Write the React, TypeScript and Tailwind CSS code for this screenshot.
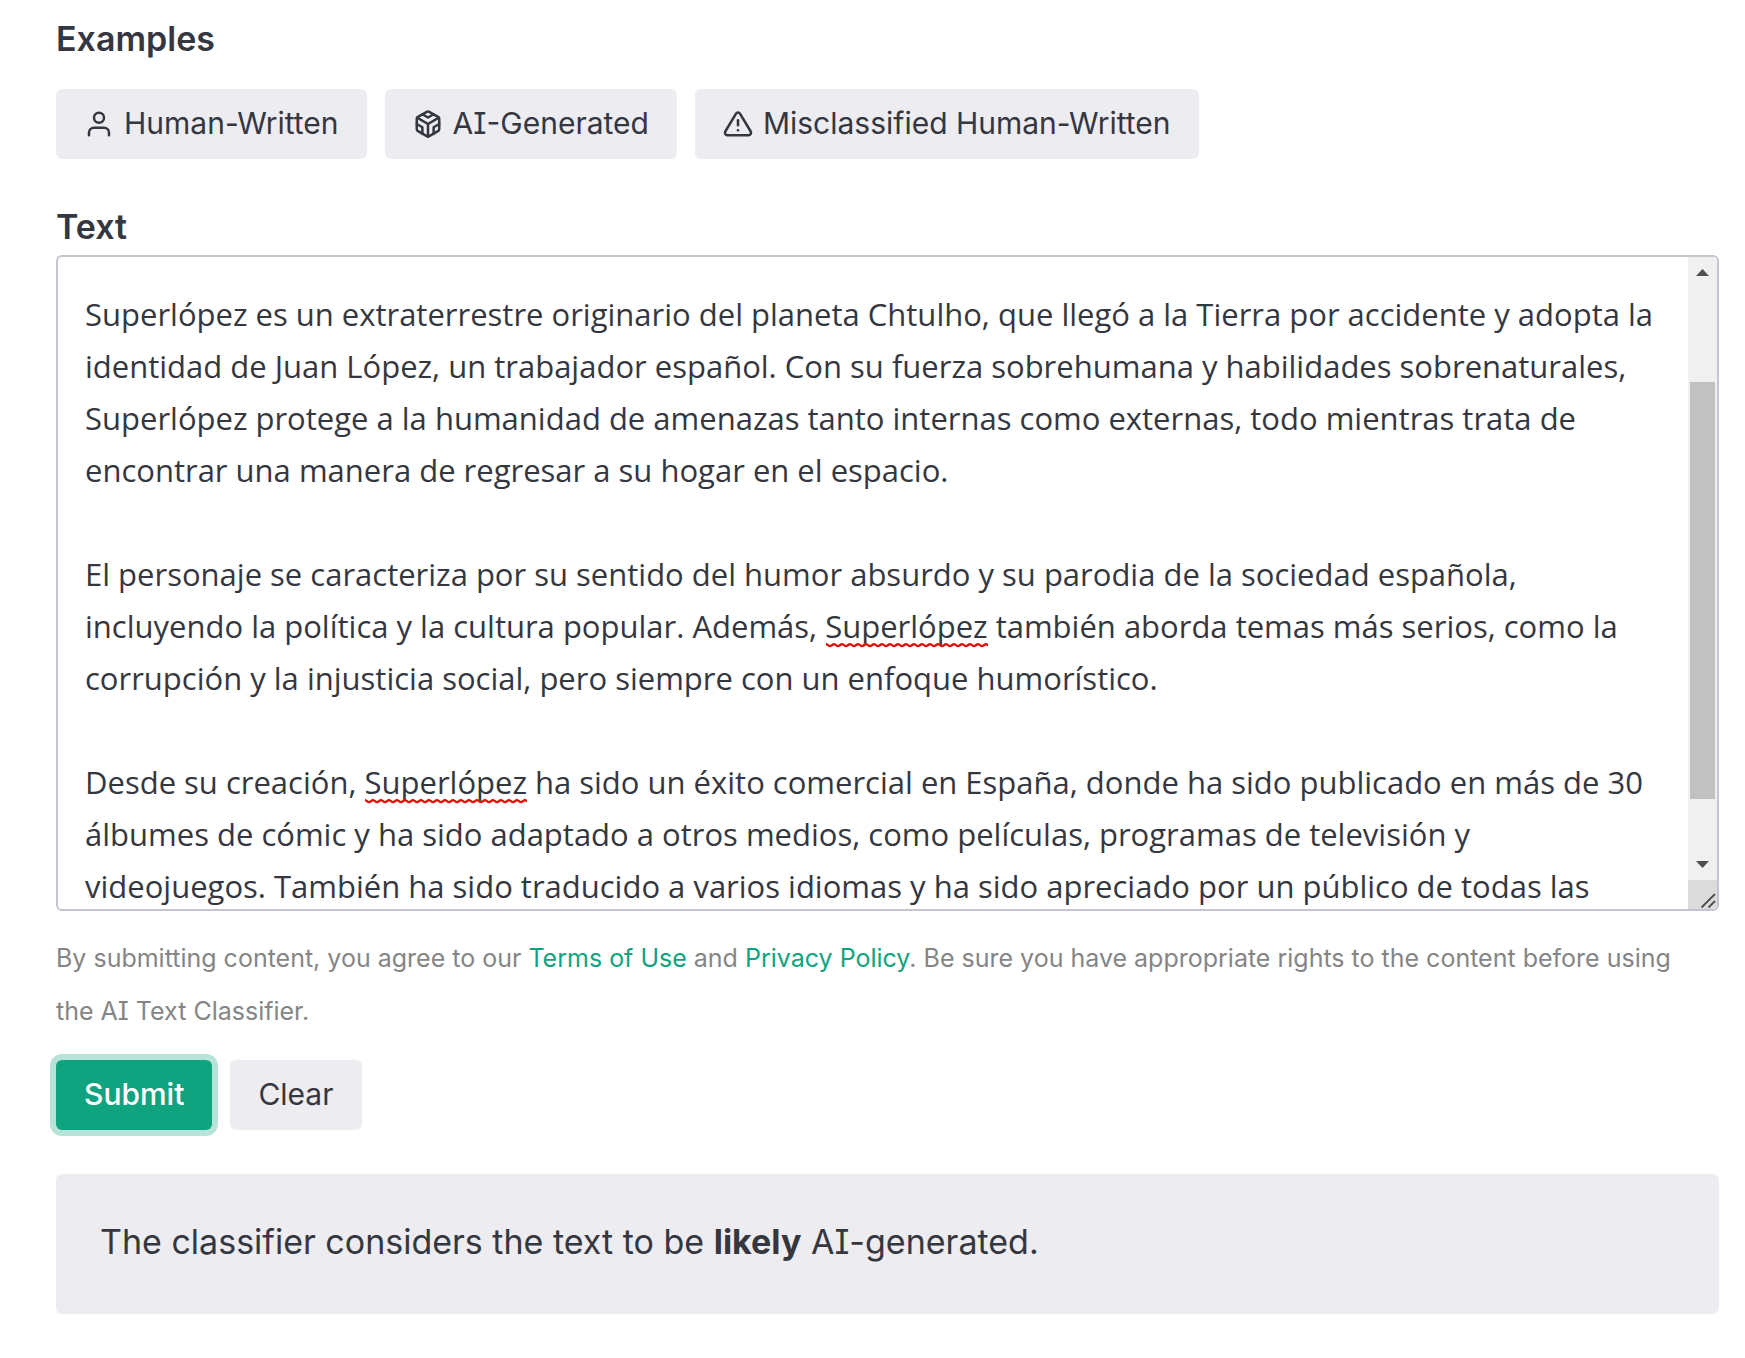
import { useState } from "react";
import type { ReactNode } from "react";
import { FiAlertTriangle, FiCodesandbox, FiUser } from "react-icons/fi";

const SAMPLE = `Superlópez es un extraterrestre originario del planeta Chtulho, que llegó a la Tierra por accidente y adopta la identidad de Juan López, un trabajador español. Con su fuerza sobrehumana y habilidades sobrenaturales, Superlópez protege a la humanidad de amenazas tanto internas como externas, todo mientras trata de encontrar una manera de regresar a su hogar en el espacio.

El personaje se caracteriza por su sentido del humor absurdo y su parodia de la sociedad española, incluyendo la política y la cultura popular. Además, Superlópez también aborda temas más serios, como la corrupción y la injusticia social, pero siempre con un enfoque humorístico.

Desde su creación, Superlópez ha sido un éxito comercial en España, donde ha sido publicado en más de 30 álbumes de cómic y ha sido adaptado a otros medios, como películas, programas de televisión y videojuegos. También ha sido traducido a varios idiomas y ha sido apreciado por un público de todas las`;

interface ButtonProps {
    children: ReactNode;
    icon?: ReactNode;
    primary?: boolean;
    onClick?: () => void;
}

const Button = ({ children, icon, primary, onClick }: ButtonProps) => {
    const colors = primary
        ? 'bg-[#10a37f] text-white font-medium ring-[6px] ring-[#b7e3d8]'
        : 'bg-[#ececf1] text-[#353740]';
    return (
        <button
            type="button"
            onClick={onClick}
            className={'flex items-center gap-[10px] h-[70px] px-7 rounded-md text-[30px] leading-10 whitespace-nowrap ' + colors}
        >
            {icon}
            {/* baseline sits slightly above the middle */}
            <span className="pb-[2px]">{children}</span>
        </button>
    );
};

// red wave under a misspelled word
const Squiggle = ({ className }: { className: string }) => (
    <svg className={'absolute h-[6px] w-[162px] pointer-events-none ' + className} aria-hidden="true">
        <defs>
            <pattern id="wave" width="8" height="6" patternUnits="userSpaceOnUse">
                <path d="M-2 1.5 Q0 1.5 2 3.2 T6 3.2 T10 3.2" fill="none" stroke="#e3120b" strokeWidth="2.4" />
            </pattern>
        </defs>
        <rect width="100%" height="6" fill="url(#wave)" />
    </svg>
);

const ScrollColumn = () => (
    <div className="flex flex-col w-[29px] shrink-0" aria-hidden="true">
        <div className="flex flex-col items-center grow bg-[#f0f0f0] py-3">
            <svg width="13" height="7" className="shrink-0"><path d="M0 7 L6.5 0 L13 7Z" fill="#505050" /></svg>
            <div className="grow-[106]" />
            <div className="grow-[417] w-[25px] bg-[#c1c1c1]" />
            <div className="grow-[62]" />
            <svg width="13" height="7" className="shrink-0"><path d="M0 0 L6.5 7 L13 0Z" fill="#505050" /></svg>
        </div>
        <svg width="29" height="29" className="shrink-0 bg-[#dcdcdc]">
            <path d="M13.5 27.5 L27 14 M20.5 27.5 L27 21" stroke="#505050" strokeWidth="1.8" fill="none" />
        </svg>
    </div>
);

export default function App() {
    const [text, setText] = useState(SAMPLE);

    return (
        <main className="min-h-screen bg-white pt-[13px] pl-14 pr-[26px] pb-10 text-[#353740] font-[Inter,sans-serif] [font-feature-settings:'cv08']">
            <h2 className="text-[34px] leading-[52px] font-semibold">Examples</h2>
            <div className="flex flex-wrap gap-[18px] mt-6">
                <Button icon={<FiUser size={30} />}>Human-Written</Button>
                <Button icon={<FiCodesandbox size={30} />}>AI-Generated</Button>
                <Button icon={<FiAlertTriangle size={30} />}>Misclassified Human-Written</Button>
            </div>

            <label htmlFor="text" className="block mt-[42px] mb-[2px] text-[34px] leading-[52px] font-semibold">
                Text
            </label>
            <div className="relative flex border-2 border-[#c5c5d2] rounded-md overflow-hidden">
                <textarea
                    id="text"
                    value={text}
                    onChange={(e) => setText(e.target.value)}
                    spellCheck={false}
                    className="block grow min-w-0 h-[652px] pt-[31px] pl-[27px] pr-[31px] resize-none overflow-hidden outline-none text-[31px] leading-[52px] font-['Open_Sans',sans-serif]"
                />
                {text === SAMPLE && (
                    <>
                        <Squiggle className="left-[768px] top-[385px]" />
                        <Squiggle className="left-[307px] top-[541px]" />
                    </>
                )}
                <ScrollColumn />
            </div>

            <p className="mt-[21px] pr-6 text-[25px] leading-[53px] text-[#858585]">
                By submitting content, you agree to our <a href="#terms" className="text-[#10a37f]">Terms of Use</a> and{' '}
                <a href="#privacy" className="text-[#10a37f]">Privacy Policy</a>. Be sure you have appropriate rights to the
                content before using the AI Text Classifier.
            </p>

            <div className="flex gap-[18px] mt-[22px]">
                <Button primary>Submit</Button>
                <Button onClick={() => setText('')}>Clear</Button>
            </div>

            <div className="mt-11 pt-[42px] pb-[46px] px-11 rounded-md bg-[#ececf1] text-[34px] leading-[52px]">
                The classifier considers the text to be <strong className="font-bold">likely</strong> AI-generated.
            </div>
        </main>
    );
}
